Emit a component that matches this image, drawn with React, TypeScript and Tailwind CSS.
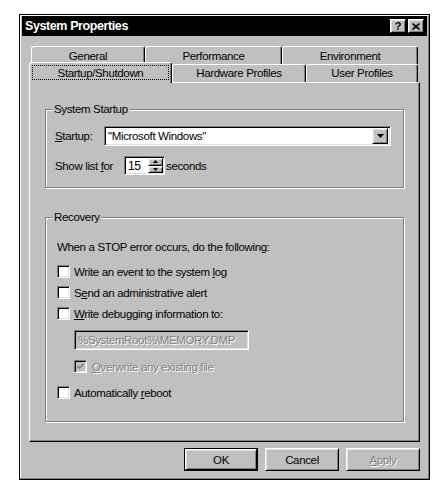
import type { ReactNode } from "react"

const raised =
  "border border-t-white border-l-white border-r-black border-b-black shadow-[inset_1px_1px_0_#dfdfdf,inset_-1px_-1px_0_#808080] bg-[#c0c0c0]"
const sunken =
  "border border-t-[#808080] border-l-[#808080] border-r-white border-b-white shadow-[inset_1px_1px_0_#000,inset_-1px_-1px_0_#dfdfdf]"
const disabledText = "text-[#808080] [text-shadow:1px_1px_0_#fff]"

function Check({ checked = false, disabled = false }: { checked?: boolean; disabled?: boolean }) {
  return (
    <span
      className={`w-[13px] h-[13px] shrink-0 flex items-center justify-center ${sunken} ${
        disabled ? "bg-[#c0c0c0]" : "bg-white"
      }`}
    >
      {checked && (
        <svg width="7" height="7" viewBox="0 0 7 7">
          <path d="M0.5 3 L2.5 5.2 L6.5 1" fill="none" stroke={disabled ? "#808080" : "#000"} strokeWidth="1.6" />
        </svg>
      )}
    </span>
  )
}

function CheckRow({ children, className = "" }: { children: ReactNode; className?: string }) {
  return (
    <div className={`flex items-center gap-[4px] h-[13px] ${className}`}>
      <Check />
      <span>{children}</span>
    </div>
  )
}

function BackTab({ width, children }: { width: string; children: ReactNode }) {
  return (
    <div
      className={`${width} h-full border-t border-l border-r border-t-white border-l-white border-r-black shadow-[inset_-1px_0_0_#808080] rounded-t-[3px] flex justify-center pt-[2px]`}
    >
      {children}
    </div>
  )
}

function FrontTab({ width, children }: { width: string; children: ReactNode }) {
  return (
    <div
      className={`${width} h-[18px] border-t border-l border-r border-t-white border-l-white border-r-black shadow-[inset_-1px_0_0_#808080] rounded-t-[3px] flex justify-center pt-[1px]`}
    >
      {children}
    </div>
  )
}

function Button({ children, isDefault = false, disabled = false }: { children: ReactNode; isDefault?: boolean; disabled?: boolean }) {
  const face = (
    <div className={`w-full h-full flex items-center justify-center ${raised} ${disabled ? disabledText : ""}`}>
      {children}
    </div>
  )
  if (isDefault) {
    return <div className="w-[74px] h-[23px] border border-black">{face}</div>
  }
  return <div className="w-[74px] h-[23px]">{face}</div>
}

export default function App() {
  return (
    <div className="w-[447px] h-[495px] bg-white pt-[14px] pl-[19px] [font-family:'Liberation_Sans',Arial,sans-serif] text-[11.5px] tracking-[-0.35px] leading-[14px] text-black">
      <div className="w-[411px] h-[466px] border border-black bg-[#c0c0c0]">
        <div className="h-full border border-t-white border-l-white border-r-[#808080] border-b-[#808080] px-[1px]">
          {/* title bar */}
          <div className="h-[20px] bg-black flex items-center justify-between pl-[3px] pr-[3px]">
            <span className="text-white font-bold text-[12.5px] tracking-[-0.4px]">System Properties</span>
            <div className="flex gap-[2px]">
              <div className={`w-[16px] h-[14px] flex items-center justify-center font-bold text-[11px] leading-none ${raised}`}>?</div>
              <div className={`w-[16px] h-[14px] flex items-center justify-center ${raised}`}>
                <svg width="8" height="7" viewBox="0 0 8 7">
                  <path d="M0.5 0.5 L7.5 6.5 M7.5 0.5 L0.5 6.5" stroke="#000" strokeWidth="1.6" />
                </svg>
              </div>
            </div>
          </div>

          <div className="mt-[10px] ml-[7px] w-[391px]">
            {/* tabs */}
            <div className="flex h-[18px] pl-[2px]">
              <BackTab width="w-[114px]">General</BackTab>
              <BackTab width="w-[137px]">Performance</BackTab>
              <BackTab width="w-[136px]">Environment</BackTab>
            </div>
            <div className="flex h-[18px] items-end">
              <div className="relative z-10 w-[143px] h-[21px] -mb-[1px] bg-[#c0c0c0] border-t border-l border-r border-t-white border-l-white border-r-black shadow-[inset_-1px_0_0_#808080] rounded-t-[3px]">
                <div className="mx-[2px] mt-[2px] h-[15px] border border-dotted border-black flex items-center justify-center">
                  Startup/Shutdown
                </div>
              </div>
              <FrontTab width="w-[134px]">Hardware Profiles</FrontTab>
              <FrontTab width="w-[112px]">User Profiles</FrontTab>
            </div>

            {/* panel */}
            <div className="h-[360px] border border-t-white border-l-white border-r-black border-b-black shadow-[inset_-1px_-1px_0_#808080] px-[15px] pt-[19px]">
              <fieldset className="border border-[#808080] shadow-[1px_1px_0_#fff,inset_1px_1px_0_#fff]">
                <legend className="ml-[6px] px-[2px] bg-[#c0c0c0] leading-[14px]">System Startup</legend>
                <div className="pl-[9px] pt-[10px] pb-[12px]">
                  <div className="flex items-center h-[20px]">
                    <span className="w-[49px]">
                      <u>S</u>tartup:
                    </span>
                    <div className={`w-[287px] h-[20px] bg-white p-[2px] flex items-center ${sunken}`}>
                      <span className="flex-1 pl-[1px]">"Microsoft Windows"</span>
                      <div className={`w-[16px] h-[16px] flex items-center justify-center ${raised}`}>
                        <svg width="7" height="4" viewBox="0 0 7 4">
                          <polygon points="0,0 7,0 3.5,4" fill="#000" />
                        </svg>
                      </div>
                    </div>
                  </div>
                  <div className="flex items-center h-[19px] mt-[10px]">
                    <span className="w-[69px]">
                      Show list <u>f</u>or
                    </span>
                    <div className={`w-[41px] h-[19px] bg-white p-[1px] flex ${sunken}`}>
                      <span className="flex-1 pl-[2px] flex items-center text-[12px]">15</span>
                      <div className="w-[15px] h-full flex flex-col">
                        <div className={`flex-1 flex items-center justify-center ${raised}`}>
                          <svg width="5" height="3" viewBox="0 0 5 3">
                            <polygon points="2.5,0 5,3 0,3" fill="#000" />
                          </svg>
                        </div>
                        <div className={`flex-1 flex items-center justify-center ${raised}`}>
                          <svg width="5" height="3" viewBox="0 0 5 3">
                            <polygon points="0,0 5,0 2.5,3" fill="#000" />
                          </svg>
                        </div>
                      </div>
                    </div>
                    <span className="ml-[1px]">seconds</span>
                  </div>
                </div>
              </fieldset>

              <fieldset className="mt-[22px] border border-[#808080] shadow-[1px_1px_0_#fff,inset_1px_1px_0_#fff]">
                <legend className="ml-[6px] px-[2px] bg-[#c0c0c0] leading-[14px]">Recovery</legend>
                <div className="pl-[11px] pt-[16px] pb-[22px]">
                  <div>When a STOP error occurs, do the following:</div>
                  <CheckRow className="mt-[11px]">
                    Write an event to the system <u>l</u>og
                  </CheckRow>
                  <CheckRow className="mt-[8px]">
                    S<u>e</u>nd an administrative alert
                  </CheckRow>
                  <CheckRow className="mt-[8px]">
                    <u>W</u>rite debugging information to:
                  </CheckRow>
                  <div className={`mt-[10px] ml-[17px] w-[175px] h-[20px] bg-[#c0c0c0] flex items-center pl-[3px] ${sunken} ${disabledText}`}>
                    {"%SystemRoot%\\MEMORY.DMP"}
                  </div>
                  <div className="mt-[10px] ml-[17px] flex items-center gap-[5px] h-[13px]">
                    <Check checked disabled />
                    <span className={disabledText}>
                      <u>O</u>verwrite any existing file
                    </span>
                  </div>
                  <CheckRow className="mt-[13px]">
                    Automatically <u>r</u>eboot
                  </CheckRow>
                </div>
              </fieldset>
            </div>

            {/* buttons */}
            <div className="mt-[6px] flex justify-end gap-[7px]">
              <Button isDefault>OK</Button>
              <Button>Cancel</Button>
              <Button disabled>
                <span>
                  <u>A</u>pply
                </span>
              </Button>
            </div>
          </div>
        </div>
      </div>
    </div>
  )
}
